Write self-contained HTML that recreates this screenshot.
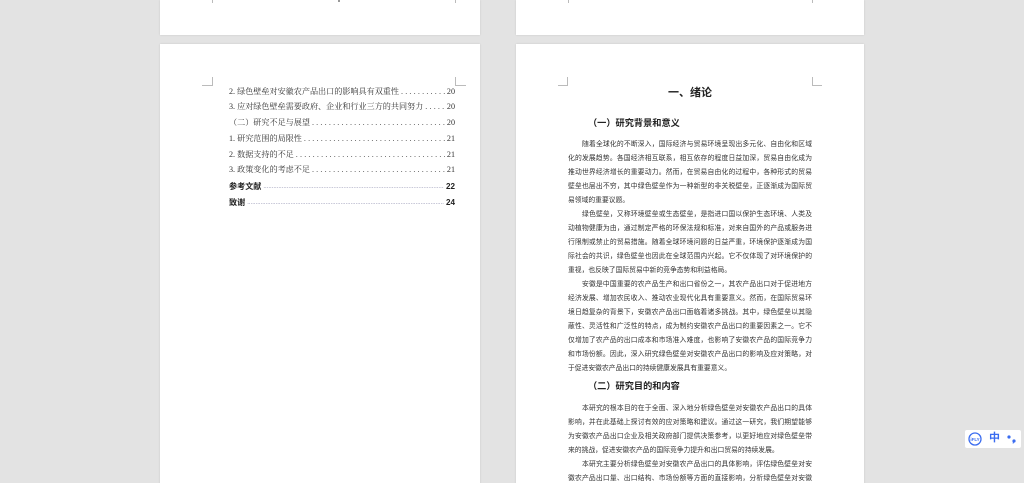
<!DOCTYPE html>
<html><head><meta charset="utf-8">
<style>
*{margin:0;padding:0;box-sizing:border-box}
html,body{width:1024px;height:483px;overflow:hidden;background:#e3e3e3}
body{position:relative;font-family:"Liberation Sans","Noto Sans CJK SC",sans-serif}
.pg{position:absolute;background:#fff;box-shadow:0 0 2px rgba(0,0,0,.12)}
.mk{position:absolute;border-color:#bbb;border-style:solid;border-width:0}
.toc{position:absolute;left:229px;width:226px;font-family:"Liberation Serif","Noto Serif CJK SC",serif;font-size:8.1px;color:#333;display:flex;align-items:flex-end;line-height:10px;white-space:nowrap}
.toc .d{flex:1;overflow:hidden;letter-spacing:2.2px;margin:0 2px;color:#555}
.toc.b{font-family:"Liberation Sans","Noto Sans CJK SC",sans-serif;font-weight:bold;color:#222}
.toc.b .d{letter-spacing:0;font-weight:normal;font-size:6px;color:#88a}
.ln{position:absolute;left:568px;width:244px;font-size:6.8px;color:#333;line-height:9px;text-align:justify;text-align-last:justify;white-space:nowrap;overflow:hidden}
.ln.i{left:582px;width:230px}
.ln.e{text-align-last:left}
.h2{position:absolute;left:588px;font-size:9.2px;font-weight:bold;color:#222;line-height:11px}
</style></head><body>
<div class="pg" style="left:160px;top:0;width:320px;height:35px"></div>
<div class="pg" style="left:516px;top:0;width:348px;height:35px"></div>
<div class="mk" style="left:212px;top:0;height:3px;border-left-width:1px"></div>
<div class="mk" style="left:455px;top:0;height:3px;border-left-width:1px"></div>
<div class="mk" style="left:338px;top:0;height:2px;border-left-width:2px;border-color:#999"></div>
<div class="mk" style="left:568px;top:0;height:3px;border-left-width:1px"></div>
<div class="mk" style="left:812px;top:0;height:3px;border-left-width:1px"></div>

<div class="pg" style="left:160px;top:44px;width:320px;height:450px"></div>
<div class="pg" style="left:516px;top:44px;width:348px;height:450px"></div>

<div class="mk" style="left:202px;top:77px;width:11px;height:9px;border-right-width:1px;border-bottom-width:1px"></div>
<div class="mk" style="left:455px;top:77px;width:11px;height:9px;border-left-width:1px;border-bottom-width:1px"></div>
<div class="mk" style="left:558px;top:77px;width:10px;height:9px;border-right-width:1px;border-bottom-width:1px"></div>
<div class="mk" style="left:812px;top:77px;width:10px;height:9px;border-left-width:1px;border-bottom-width:1px"></div>

<div class="toc" style="top:87px"><span>2. 绿色壁垒对安徽农产品出口的影响具有双重性</span><span class="d">..............................</span><span>20</span></div>
<div class="toc" style="top:102px"><span>3. 应对绿色壁垒需要政府、企业和行业三方的共同努力</span><span class="d">..............................</span><span>20</span></div>
<div class="toc" style="top:118px"><span>（二）研究不足与展望</span><span class="d">..............................................</span><span>20</span></div>
<div class="toc" style="top:134px"><span>1. 研究范围的局限性</span><span class="d">..............................................</span><span>21</span></div>
<div class="toc" style="top:150px"><span>2. 数据支持的不足</span><span class="d">..............................................</span><span>21</span></div>
<div class="toc" style="top:165px"><span>3. 政策变化的考虑不足</span><span class="d">..............................................</span><span>21</span></div>
<div class="toc b" style="top:182px"><span>参考文献</span><span class="d">..............................................................................................................................</span><span>22</span></div>
<div class="toc b" style="top:198px"><span>致谢</span><span class="d">..............................................................................................................................</span><span>24</span></div>

<div style="position:absolute;left:640px;width:100px;top:87px;text-align:center;font-size:11px;font-weight:bold;color:#222;line-height:12px">一、绪论</div>
<div class="h2" style="top:118px">（一）研究背景和意义</div>

<div class="ln i" style="top:140px">随着全球化的不断深入，国际经济与贸易环境呈现出多元化、自由化和区域</div>
<div class="ln" style="top:154px">化的发展趋势。各国经济相互联系，相互依存的程度日益加深，贸易自由化成为</div>
<div class="ln" style="top:168px">推动世界经济增长的重要动力。然而，在贸易自由化的过程中，各种形式的贸易</div>
<div class="ln" style="top:182px">壁垒也层出不穷，其中绿色壁垒作为一种新型的非关税壁垒，正逐渐成为国际贸</div>
<div class="ln e" style="top:196px">易领域的重要议题。</div>

<div class="ln i" style="top:210px">绿色壁垒，又称环境壁垒或生态壁垒，是指进口国以保护生态环境、人类及</div>
<div class="ln" style="top:224px">动植物健康为由，通过制定严格的环保法规和标准，对来自国外的产品或服务进</div>
<div class="ln" style="top:238px">行限制或禁止的贸易措施。随着全球环境问题的日益严重，环境保护逐渐成为国</div>
<div class="ln" style="top:252px">际社会的共识，绿色壁垒也因此在全球范围内兴起。它不仅体现了对环境保护的</div>
<div class="ln e" style="top:266px">重视，也反映了国际贸易中新的竞争态势和利益格局。</div>

<div class="ln i" style="top:280px">安徽是中国重要的农产品生产和出口省份之一，其农产品出口对于促进地方</div>
<div class="ln" style="top:294px">经济发展、增加农民收入、推动农业现代化具有重要意义。然而，在国际贸易环</div>
<div class="ln" style="top:308px">境日趋复杂的背景下，安徽农产品出口面临着诸多挑战。其中，绿色壁垒以其隐</div>
<div class="ln" style="top:322px">蔽性、灵活性和广泛性的特点，成为制约安徽农产品出口的重要因素之一。它不</div>
<div class="ln" style="top:336px">仅增加了农产品的出口成本和市场准入难度，也影响了安徽农产品的国际竞争力</div>
<div class="ln" style="top:350px">和市场份额。因此，深入研究绿色壁垒对安徽农产品出口的影响及应对策略，对</div>
<div class="ln e" style="top:364px">于促进安徽农产品出口的持续健康发展具有重要意义。</div>

<div class="h2" style="top:381px">（二）研究目的和内容</div>

<div class="ln i" style="top:404px">本研究的根本目的在于全面、深入地分析绿色壁垒对安徽农产品出口的具体</div>
<div class="ln" style="top:418px">影响，并在此基础上探讨有效的应对策略和建议。通过这一研究，我们期望能够</div>
<div class="ln" style="top:432px">为安徽农产品出口企业及相关政府部门提供决策参考，以更好地应对绿色壁垒带</div>
<div class="ln e" style="top:446px">来的挑战，促进安徽农产品的国际竞争力提升和出口贸易的持续发展。</div>
<div class="ln i" style="top:460px">本研究主要分析绿色壁垒对安徽农产品出口的具体影响，评估绿色壁垒对安</div>
<div class="ln" style="top:474px">徽农产品出口量、出口结构、市场份额等方面的直接影响，分析绿色壁垒对安徽</div>

<div style="position:absolute;left:965px;top:430px;width:56px;height:18px;background:#fff;border-radius:2px"></div>
<svg style="position:absolute;left:968px;top:432px" width="14" height="14" viewBox="0 0 14 14"><circle cx="7" cy="7" r="6" fill="none" stroke="#3a6cf0" stroke-width="1.3"/><text x="7" y="9" font-size="4.5" text-anchor="middle" fill="#3a6cf0" font-family="Liberation Sans" font-weight="bold">iFLY</text></svg>
<div style="position:absolute;left:989px;top:432px;font-size:11px;font-weight:bold;color:#3a6cf0;line-height:13px">中</div>
<svg style="position:absolute;left:1006px;top:434px" width="12" height="10" viewBox="0 0 12 10"><circle cx="3" cy="3" r="1.6" fill="#3a6cf0"/><circle cx="8" cy="7" r="1.6" fill="#3a6cf0"/><path d="M8 7 L7 9.5" stroke="#3a6cf0" stroke-width="1"/></svg>
</body></html>
